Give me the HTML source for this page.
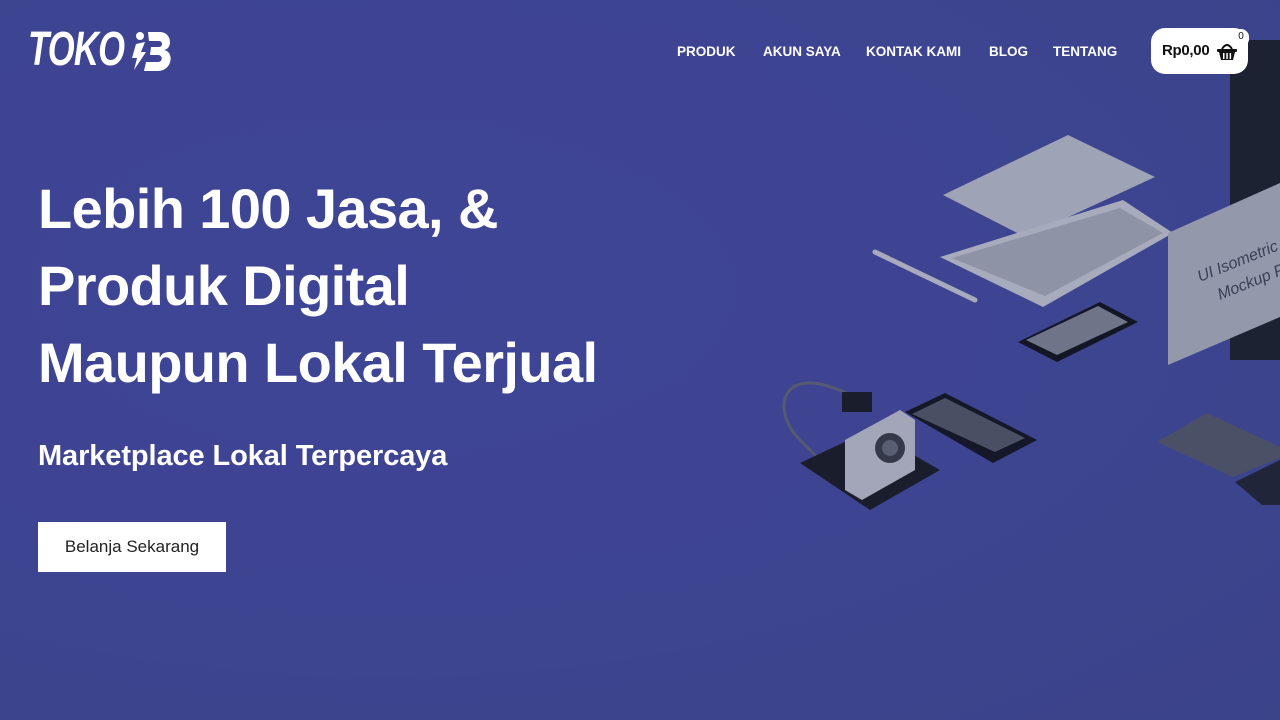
<!DOCTYPE html>
<html><head><meta charset="utf-8"><style>
*{margin:0;padding:0;box-sizing:border-box}
body{width:1280px;height:720px;overflow:hidden;background:#3e4592;font-family:"Liberation Sans",sans-serif;position:relative;color:#fff}
.bg{position:absolute;inset:0;background:radial-gradient(ellipse at 30% 40%,#3f4596 0%,#3d4490 60%,#3b4389 100%)}
.logo{position:absolute;left:28px;top:24px;font-size:48px;font-weight:bold;font-style:italic;letter-spacing:-1px;transform:scaleX(.72);transform-origin:left;line-height:52px}
nav{position:absolute;top:44px;font-size:13.5px;font-weight:bold}
nav span{position:absolute;white-space:nowrap}
.cart{position:absolute;left:1151px;top:28px;width:97px;height:46px;background:#fff;border-radius:14px;color:#111;font-size:15px;font-weight:bold;padding:14px 0 0 11px;letter-spacing:-.3px}
.badge{position:absolute;left:1233px;top:29px;width:16px;height:18px;background:#fff;border-radius:8px;color:#111;font-size:10px;text-align:center;line-height:16px}
h1{position:absolute;left:38px;top:170px;font-size:56px;line-height:77px;font-weight:bold;letter-spacing:-.6px}
h2{position:absolute;left:38px;top:440px;font-size:29px;font-weight:bold;letter-spacing:-.1px}
.btn{position:absolute;left:38px;top:522px;width:188px;height:50px;background:#fff;color:#222;font-size:17px;text-align:center;line-height:50px}
svg{position:absolute;left:0;top:0}
</style></head><body>
<div class="bg"></div>
<svg width="1280" height="720">
<rect x="1230" y="40" width="60" height="320" fill="#1c2232"/>
<polygon points="943,195 1068,135 1155,177 1025,237" fill="#9ea3b6"/>
<polygon points="940,257 1123,200 1173,233 1043,307" fill="#a7abbc"/>
<polygon points="952,258 1120,208 1163,233 1045,296" fill="#8e93a6"/>
<line x1="875" y1="252" x2="975" y2="300" stroke="#a8abbe" stroke-width="5" stroke-linecap="round"/>
<polygon points="1018,342 1100,302 1138,322 1057,362" fill="#121625"/>
<polygon points="1026,340 1098,306 1128,322 1057,355" fill="#6f7489"/>
<polygon points="1168,233 1280,183 1280,317 1168,365" fill="#9498ab"/>
<text x="1200" y="282" font-size="16" fill="#3a3f55" font-style="italic" transform="rotate(-22 1200 282)">UI Isometric De</text>
<text x="1220" y="300" font-size="16" fill="#3a3f55" font-style="italic" transform="rotate(-22 1220 300)">Mockup Pac</text>
<polygon points="905,412 945,393 1037,440 993,463" fill="#141828"/>
<polygon points="912,414 945,398 1025,438 995,452" fill="#4a4f64"/>
<path d="M850,395 C780,360 770,410 800,440 L820,460" stroke="#555a70" stroke-width="3" fill="none"/>
<polygon points="800,463 870,430 940,470 870,510" fill="#1a1e2c"/>
<polygon points="845,440 900,410 915,420 915,470 862,500 845,490" fill="#a2a6b8"/>
<rect x="842" y="392" width="30" height="20" fill="#1a1e2c"/>
<circle cx="890" cy="448" r="15" fill="#343848"/><circle cx="890" cy="448" r="8" fill="#5a5e72"/>
<polygon points="1157,442 1207,413 1280,447 1280,458 1233,477" fill="#4a5066"/>
<polygon points="1235,482 1280,460 1280,505 1262,505" fill="#20253a"/>
<!-- logo B mark -->
<g fill="#fff">
<circle cx="140" cy="36" r="4"/>
<polygon points="136,44 145,42 141,52 146,52 134,70 137,58 132,58"/>
<path d="M148,32 H160 C172,32 173,49 164,50 C175,52 172,71 158,71 H144 L146,62 H158 C163,62 163,55 158,55 H150 L151,47 H159 C163,47 163,41 159,41 H149 Z"/>
</g>
<!-- basket -->
<g transform="translate(1217,41)" fill="#111">
<path d="M5,8 Q10,0 15,8" stroke="#111" stroke-width="2" fill="none"/>
<rect x="0" y="8" width="20" height="3" rx="1"/>
<path d="M2,11 H18 L16,19 H4 Z"/>
<rect x="6" y="12" width="1.5" height="6" fill="#fff"/><rect x="9.3" y="12" width="1.5" height="6" fill="#fff"/><rect x="12.6" y="12" width="1.5" height="6" fill="#fff"/>
</g>
</svg>
<div class="logo">TOKO</div>
<nav>
<span style="left:677px">PRODUK</span>
<span style="left:763px">AKUN SAYA</span>
<span style="left:866px">KONTAK KAMI</span>
<span style="left:989px">BLOG</span>
<span style="left:1053px">TENTANG</span>
</nav>
<div class="cart">Rp0,00</div>
<svg width="1280" height="720" style="pointer-events:none">
<g transform="translate(1217,41)" fill="#111">
<path d="M5,8 Q10,0 15,8" stroke="#111" stroke-width="2" fill="none"/>
<rect x="0" y="8" width="20" height="3" rx="1"/>
<path d="M2,11 H18 L16,19 H4 Z"/>
<rect x="6" y="12" width="1.5" height="6" fill="#fff"/><rect x="9.3" y="12" width="1.5" height="6" fill="#fff"/><rect x="12.6" y="12" width="1.5" height="6" fill="#fff"/>
</g>
</svg>
<div class="badge">0</div>
<h1>Lebih 100 Jasa, &amp;<br>Produk Digital<br>Maupun Lokal Terjual</h1>
<h2>Marketplace Lokal Terpercaya</h2>
<div class="btn">Belanja Sekarang</div>
</body></html>
